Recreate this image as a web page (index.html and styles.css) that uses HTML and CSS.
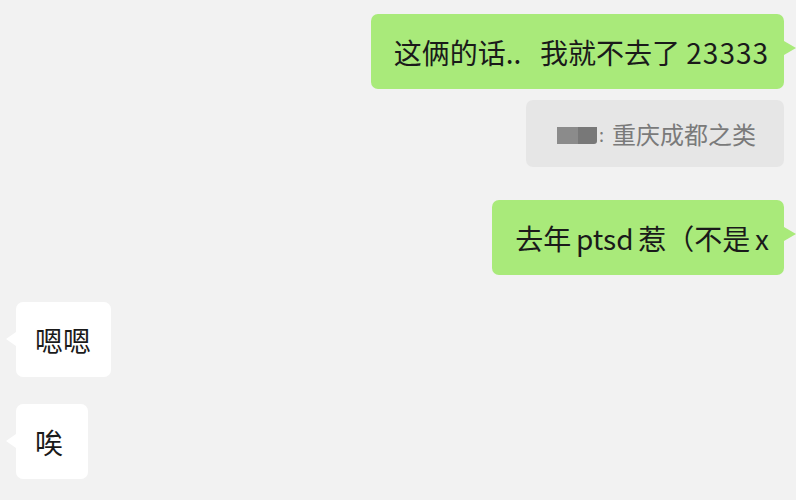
FILE: index.html
```html
<!DOCTYPE html>
<html lang="zh-CN">
<head>
<meta charset="utf-8">
<link rel="stylesheet" href="styles.css">
</head>
<body>
<div class="chat">
  <div class="msg mine">这俩的话..&nbsp;&nbsp;&nbsp;我就不去了 <span class="digits">23333</span></div>
  <div class="quote"><span class="mosaic"><span class="m1"></span><span class="m2"></span></span><span class="colon">:</span>重庆成都之类</div>
  <div class="msg mine second tight">去年 ptsd 惹（不是 x</div>
  <div class="msg theirs third">嗯嗯</div>
  <div class="msg theirs fourth">唉</div>
</div>
</body>
</html>
```
FILE: styles.css
```css
html, body {
  margin: 0;
  padding: 0;
  background: #f2f2f2;
  width: 796px;
  height: 500px;
  overflow: hidden;
}
.chat {
  display: flex;
  flex-direction: column;
  padding-top: 14px;
  font-family: "Noto Sans CJK SC", "Noto Sans", sans-serif;
}
.msg {
  position: relative;
  height: 75px;
  display: flex;
  align-items: center;
  font-size: 28px;
  color: #1a1a1a;
  border-radius: 7px;
  box-sizing: border-box;
  white-space: pre;
}
.digits {
  letter-spacing: 1px;
}
.tight {
  word-spacing: -1.5px;
}
.mine {
  align-self: flex-end;
  margin-right: 12px;
  background: #a9ea7a;
  padding: 0 15px 0 23px;
}
.mine::after {
  content: "";
  position: absolute;
  right: -12px;
  top: 27px;
  border-style: solid;
  border-width: 7px 0 7px 12px;
  border-color: transparent transparent transparent #a9ea7a;
}
.theirs {
  align-self: flex-start;
  margin-left: 16px;
  background: #ffffff;
  padding: 0 20px 0 19px;
  min-width: 72px;
}
.theirs::before {
  content: "";
  position: absolute;
  left: -10px;
  top: 30px;
  border-style: solid;
  border-width: 7px 10px 7px 0;
  border-color: transparent #ffffff transparent transparent;
}
.quote {
  align-self: flex-end;
  margin-right: 12px;
  margin-top: 11px;
  height: 67px;
  width: 258px;
  box-sizing: border-box;
  background: #e6e6e6;
  border-radius: 7px;
  display: flex;
  align-items: center;
  padding-left: 31px;
  font-size: 24px;
  color: #7a7a7a;
  white-space: nowrap;
}
.mosaic {
  display: flex;
  height: 17px;
  margin-top: 4px;
}
.m1 {
  width: 21px;
  background: #8b8b8b;
}
.m2 {
  width: 19px;
  background: #787878;
  border-radius: 0 0 3px 0;
}
.colon {
  font-size: 18px;
  margin: 0 8px 0 2px;
}
.second {
  margin-top: 33px;
}
.third {
  margin-top: 27px;
}
.fourth {
  margin-top: 27px;
}
```
